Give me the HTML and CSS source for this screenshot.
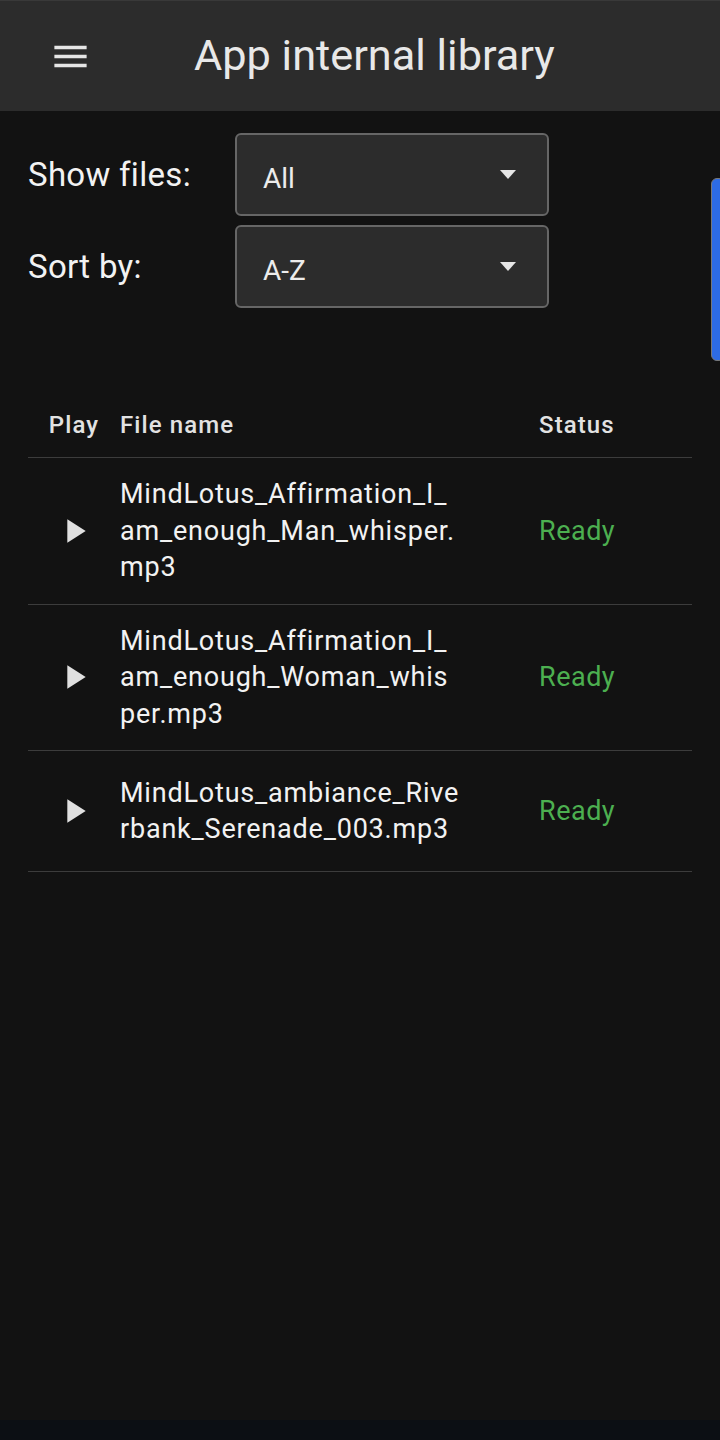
FILE: index.html
```html
<!DOCTYPE html>
<html lang="en">
<head>
  <meta charset="UTF-8">
  <title>App internal library</title>
  <link rel="stylesheet" href="styles.css">
</head>
<body>
  <header class="top-bar">
    <svg class="menu-icon" viewBox="0 0 24 24" width="43" height="43">
      <path d="M3 18h18v-2H3v2zm0-5h18v-2H3v2zm0-7v2h18V6H3z" fill="#e6e6e6"/>
    </svg>
    <h1 class="title">App internal library</h1>
  </header>

  <section class="filters">
    <label class="filter-label">Show files:</label>
    <div class="select-box"><span class="select-value">All</span><span class="select-arrow"></span></div>
    <label class="filter-label">Sort by:</label>
    <div class="select-box"><span class="select-value">A-Z</span><span class="select-arrow"></span></div>
  </section>

  <section class="file-table">
    <div class="table-row table-head">
      <div class="cell-play">Play</div>
      <div class="cell-name">File name</div>
      <div class="cell-status">Status</div>
    </div>

    <div class="table-row">
      <div class="cell-play"><svg viewBox="0 0 24 24" width="40" height="40"><path d="M8 5v14l11-7z" fill="#e0e0e0"/></svg></div>
      <div class="cell-name">MindLotus_Affirmation_I_am_enough_Man_whisper.mp3</div>
      <div class="cell-status ready">Ready</div>
    </div>

    <div class="table-row">
      <div class="cell-play"><svg viewBox="0 0 24 24" width="40" height="40"><path d="M8 5v14l11-7z" fill="#e0e0e0"/></svg></div>
      <div class="cell-name">MindLotus_Affirmation_I_am_enough_Woman_whisper.mp3</div>
      <div class="cell-status ready">Ready</div>
    </div>

    <div class="table-row">
      <div class="cell-play"><svg viewBox="0 0 24 24" width="40" height="40"><path d="M8 5v14l11-7z" fill="#e0e0e0"/></svg></div>
      <div class="cell-name">MindLotus_ambiance_Riverbank_Serenade_003.mp3</div>
      <div class="cell-status ready">Ready</div>
    </div>
  </section>

  <div class="scroll-thumb"></div>
  <div class="nav-bar"></div>
</body>
</html>
```

FILE: styles.css
```css
html, body { margin: 0; padding: 0; }
body {
  background: #121212; color: #f0f0f0;
  font-family: Roboto, "Noto Sans", sans-serif;
  min-height: 1440px;
}

.top-bar {
  display: flex; align-items: center;
  height: 111px; padding-left: 49px; box-sizing: border-box;
  background: #2c2c2c; border-top: 1px solid #393939;
}
.menu-icon { display: block; flex: none; }
.title {
  margin: 0 0 0 102px; font-size: 43.3px; font-weight: 400;
  line-height: 1; color: #e8e8e8;
}

.filters {
  display: grid; grid-template-columns: 207px 314px;
  row-gap: 9px; align-items: center;
  margin: 22px 0 0 28px;
}
.filter-label { font-size: 33px; letter-spacing: 0.3px; color: #f2f2f2; }
.select-box {
  display: flex; align-items: center; justify-content: space-between;
  height: 83px; box-sizing: border-box;
  padding: 0 31px 0 26px;
  background: #2c2c2c; border: 2px solid #666; border-radius: 6px;
}
.select-value { font-size: 28px; color: #ececec; margin-top: 7px; }
.select-arrow {
  width: 0; height: 0;
  border-left: 8.5px solid transparent; border-right: 8.5px solid transparent;
  border-top: 9px solid #e6e6e6;
}

.file-table { margin: 84px 28px 0; }
.table-row {
  display: grid; grid-template-columns: 92px 419px 153px;
  align-items: center;
  min-height: 121px; box-sizing: border-box; padding: 18px 0;
  border-bottom: 1px solid #3c3c3c;
}
.table-head {
  min-height: 0; height: 66px; padding: 0;
  font-size: 24px; font-weight: 500; color: #e2e2e2; letter-spacing: 1.1px;
}
.cell-play { display: flex; justify-content: center; }
.cell-play svg { display: block; }
.cell-name { padding-right: 79px; }
.table-row:not(.table-head) .cell-name {
  font-size: 27px; letter-spacing: 0.8px; line-height: 36.5px;
  word-break: break-all; color: #f2f2f2;
}
.ready { font-size: 27px; letter-spacing: 0.5px; color: #4caf50; }

.scroll-thumb {
  position: fixed; top: 178px; left: 711px; width: 14px; height: 183px;
  background: #2d6be5; border: 1px solid #777; border-radius: 6px; box-sizing: border-box;
}
.nav-bar {
  position: fixed; left: 0; right: 0; bottom: 0; height: 20px;
  background: #0c0f14;
}
```
